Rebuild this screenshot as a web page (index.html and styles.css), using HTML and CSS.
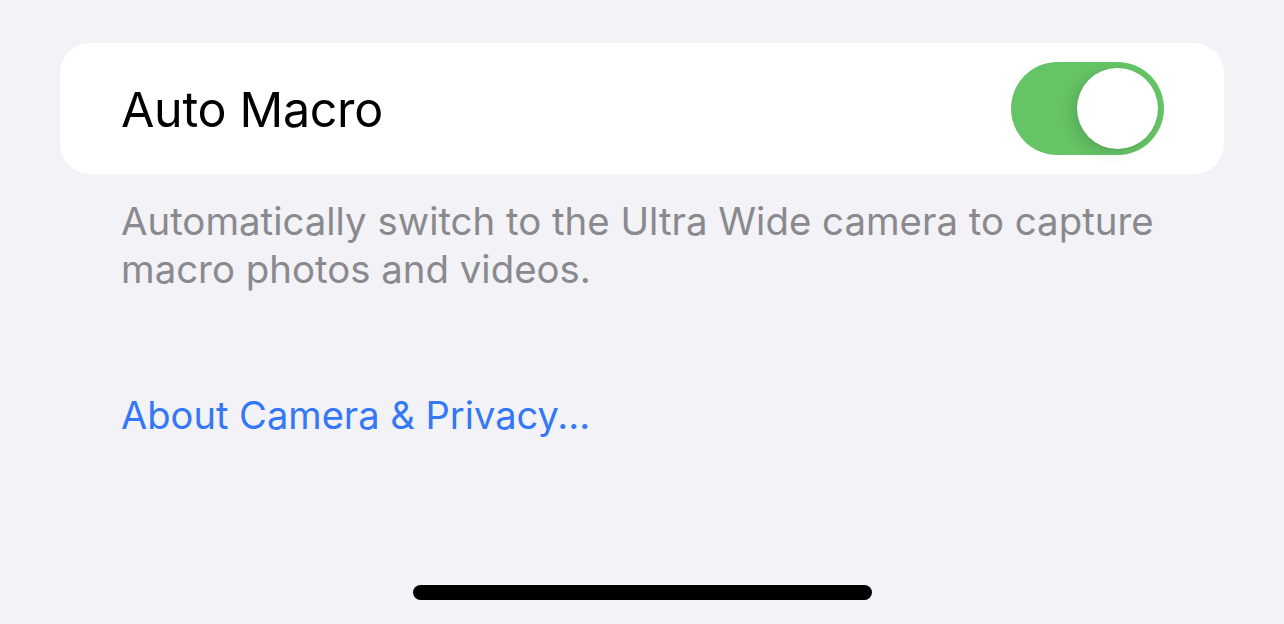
FILE: index.html
```html
<!DOCTYPE html>
<html>
<head>
<meta charset="utf-8">
<link rel="stylesheet" href="styles.css">
</head>
<body>
<div class="page">
  <div class="card">
    <span class="label">Auto Macro</span>
    <div class="toggle"><div class="knob"></div></div>
  </div>
  <p class="footer">Automatically switch to the Ultra Wide camera to capture macro photos and videos.</p>
  <a class="link">About Camera &amp; Privacy...</a>
</div>
<div class="home"></div>
</body>
</html>
```
FILE: styles.css
```css
html, body {
  margin: 0;
  padding: 0;
  background: #f2f2f7;
  width: 1284px;
  height: 624px;
  overflow: hidden;
  font-family: Inter, "Noto Sans", sans-serif;
}
.page {
  padding: 43px 60px 0 60px;
  display: flex;
  flex-direction: column;
}
.card {
  background: #fff;
  border-radius: 30px;
  height: 131px;
  display: flex;
  align-items: center;
  justify-content: space-between;
  padding: 0 60px 0 61px;
}
.label {
  font-size: 48.4px;
  color: #000;
  letter-spacing: -0.3px;
  margin-top: 2px;
}
.toggle {
  width: 153px;
  height: 93px;
  border-radius: 47px;
  background: #65c466;
  position: relative;
}
.knob {
  position: absolute;
  right: 6px;
  top: 6px;
  width: 81px;
  height: 81px;
  border-radius: 50%;
  background: #fff;
  box-shadow: -6px 4px 14px rgba(0,0,0,0.12), 0 1px 2px rgba(0,0,0,0.08);
}
.footer {
  margin: 23px 0 0 61px;
  font-size: 38.4px;
  line-height: 48px;
  color: #8a8a8e;
  width: 1060px;
}
.link {
  margin: 98px 0 0 61px;
  font-size: 38.1px;
  line-height: 48px;
  color: #3478f6;
}
.home {
  position: absolute;
  left: 413px;
  top: 585px;
  width: 459px;
  height: 15px;
  border-radius: 8px;
  background: #000;
}
```
